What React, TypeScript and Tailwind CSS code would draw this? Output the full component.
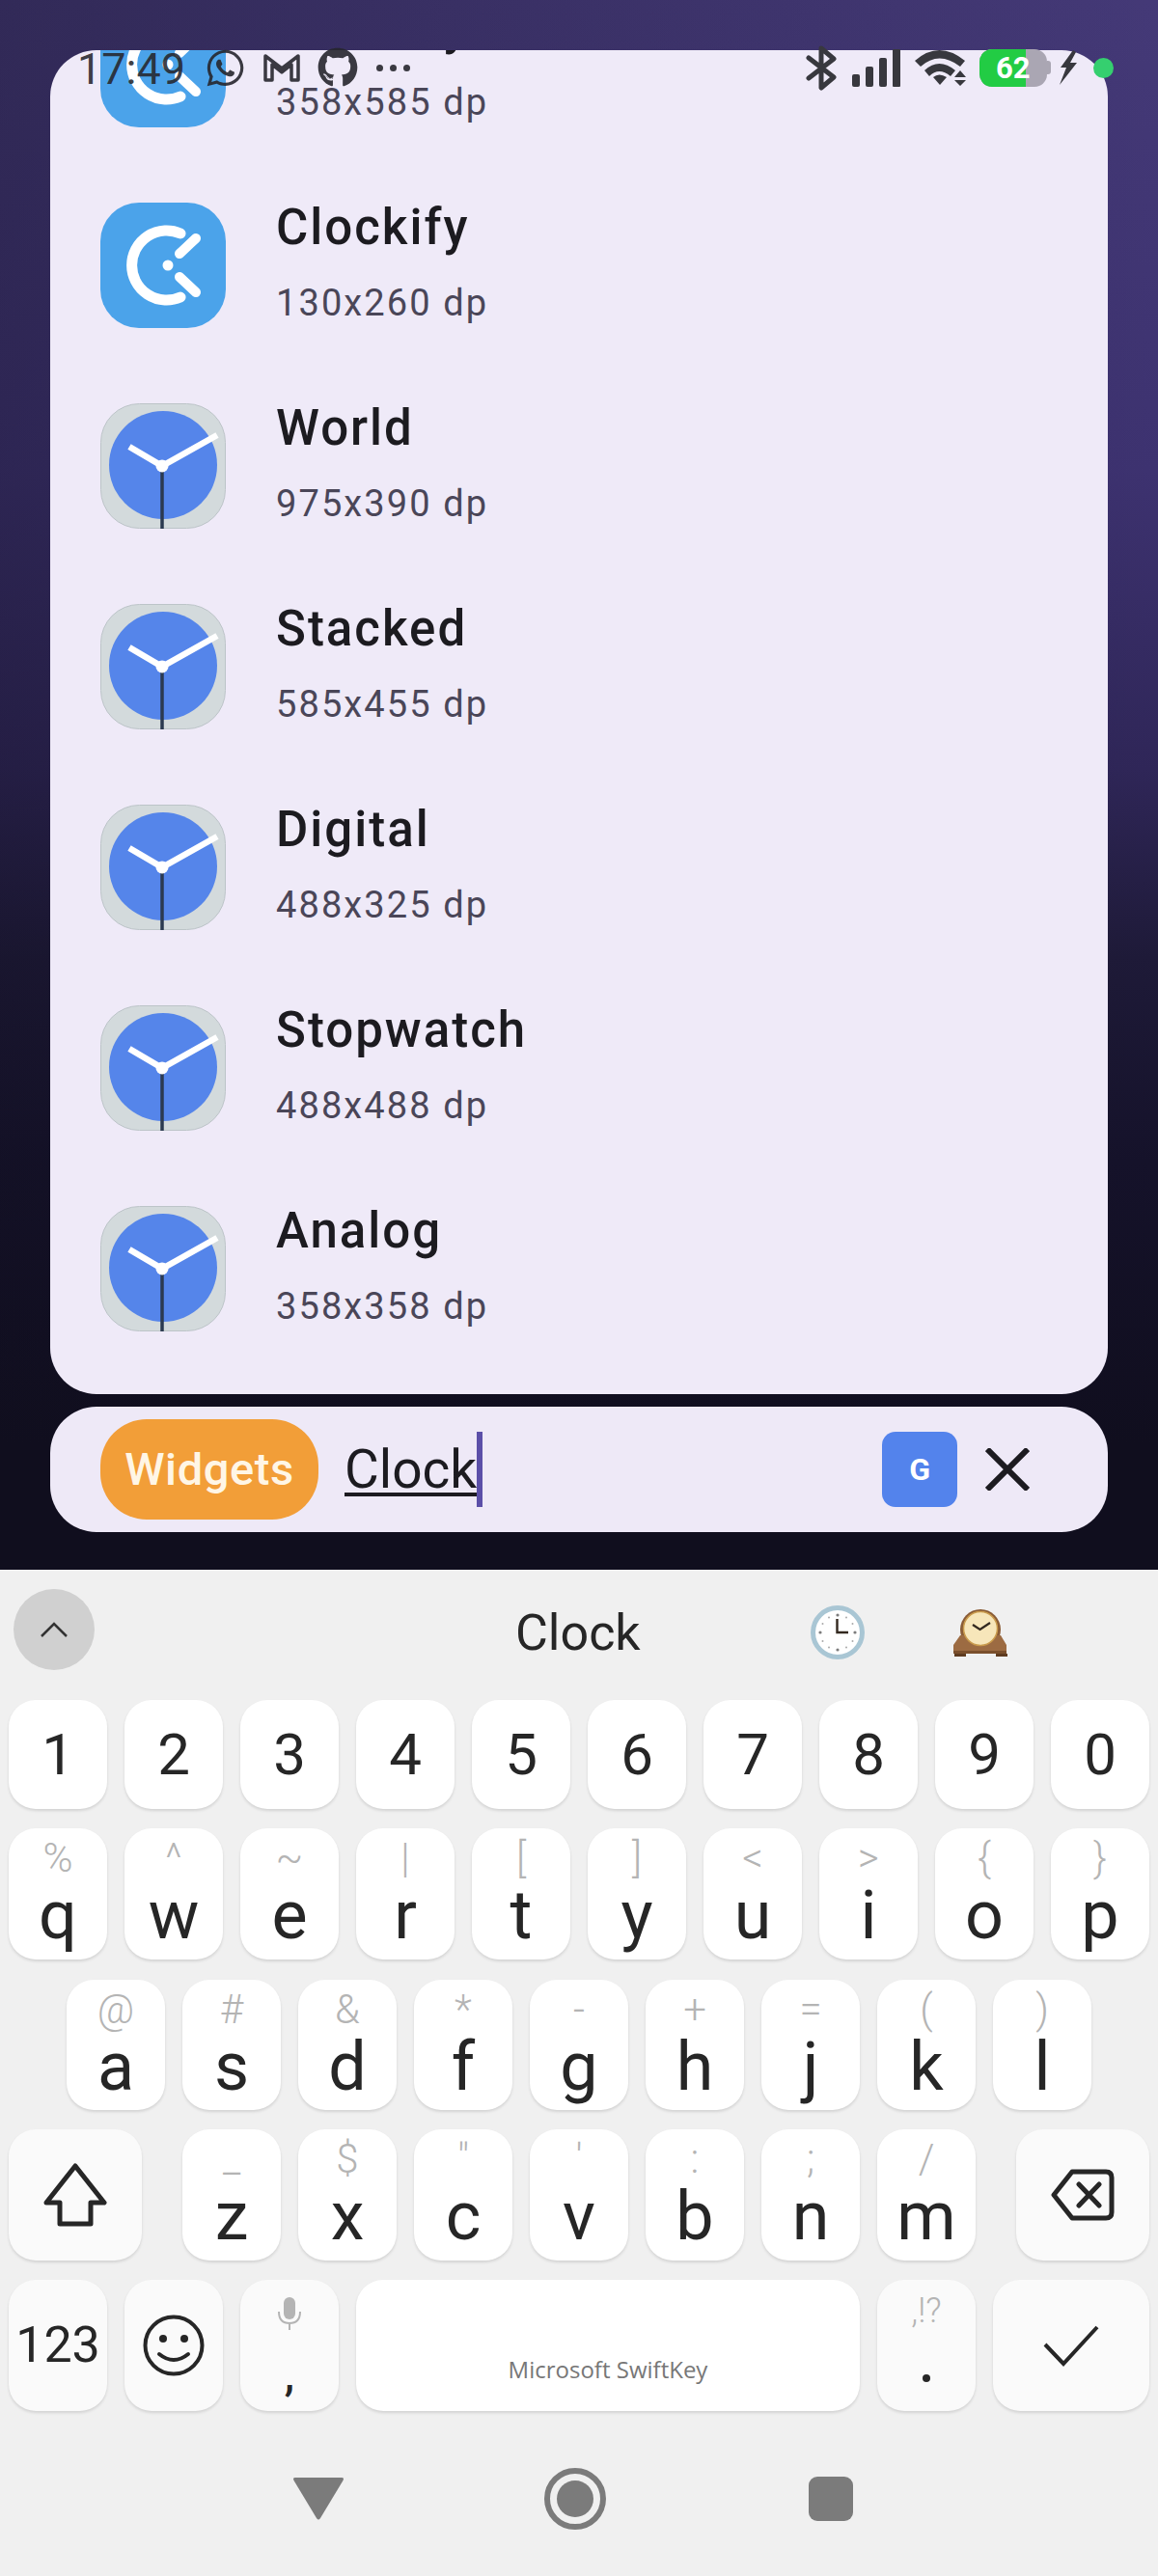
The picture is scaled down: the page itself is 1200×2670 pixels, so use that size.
import React from 'react';
import { FaWhatsapp, FaGithub } from 'react-icons/fa';

const widgets = [
  { name: 'Clockify', size: '358x585 dp', app: 'clockify' },
  { name: 'Clockify', size: '130x260 dp', app: 'clockify' },
  { name: 'World', size: '975x390 dp', app: 'clock' },
  { name: 'Stacked', size: '585x455 dp', app: 'clock' },
  { name: 'Digital', size: '488x325 dp', app: 'clock' },
  { name: 'Stopwatch', size: '488x488 dp', app: 'clock' },
  { name: 'Analog', size: '358x358 dp', app: 'clock' },
];

const row2 = [
  ['q', '%'], ['w', '^'], ['e', '~'], ['r', '|'], ['t', '['],
  ['y', ']'], ['u', '<'], ['i', '>'], ['o', '{'], ['p', '}'],
];
const row3 = [
  ['a', '@'], ['s', '#'], ['d', '&'], ['f', '*'], ['g', '-'],
  ['h', '+'], ['j', '='], ['k', '('], ['l', ')'],
];
const row4 = [
  ['z', '_'], ['x', '$'], ['c', '"'], ['v', "'"], ['b', ':'], ['n', ';'], ['m', '/'],
];

const ClockifyIcon = () => (
  <svg width="130" height="130" viewBox="0 0 130 130" className="shrink-0">
    <rect width="130" height="130" rx="40" fill="#4ba3ea" />
    <path d="M83 32 A36 36 0 1 0 83 98" fill="none" stroke="#fff" strokeWidth="11" strokeLinecap="round" />
    <path d="M82 53 L99 37 M82 77 L99 93" fill="none" stroke="#fff" strokeWidth="10" strokeLinecap="round" />
    <circle cx="70" cy="65" r="5.5" fill="#fff" />
  </svg>
);

const ClockIcon = () => (
  <svg width="130" height="130" viewBox="0 0 130 130" className="shrink-0">
    <rect x="0.5" y="0.5" width="129" height="129" rx="40" fill="#d3dadc" stroke="#bcc4c8" />
    <circle cx="65" cy="64" r="56" fill="#5585ea" />
    <path d="M64 65 L64 130" stroke="#2b3a50" strokeWidth="3.5" />
    <path d="M64 65 L121 33 M64 65 L30 45" stroke="#fff" strokeWidth="6.5" />
    <circle cx="64" cy="65" r="6.5" fill="#fff" />
  </svg>
);

const StatusBar = () => (
  <div className="absolute left-0 top-[46px] w-[1200px] h-[48px] flex items-center text-[#26262ce6]">
    <span className="ml-[80px] w-[111px] text-[45px] leading-[48px] mt-[3px]">17:49</span>
    <FaWhatsapp className="ml-[20.5px]" size={43} />
    <svg className="ml-[18.5px]" width="38" height="30" viewBox="0 0 38 30" fill="none" stroke="currentColor" strokeWidth="3.5">
      <path d="M2 28 V3 L19 16 L36 3 V28 H29 V12 L19 20 L9 12 V28 Z" strokeLinejoin="round" />
    </svg>
    <FaGithub className="ml-[18px]" size={42} />
    <div className="ml-[19px] flex gap-[7px]">
      <div className="w-[7px] h-[7px] rounded-full bg-current" />
      <div className="w-[7px] h-[7px] rounded-full bg-current" />
      <div className="w-[7px] h-[7px] rounded-full bg-current" />
    </div>
    <svg className="ml-[410px]" width="33" height="47" viewBox="0 0 33 47" fill="none" stroke="#38383e" strokeWidth="5" strokeLinecap="round" strokeLinejoin="round">
      <path d="M3 13 L29 33 L16 44 V3 L29 14 L3 34" />
    </svg>
    <svg className="ml-[15px]" width="50" height="39" viewBox="0 0 50 39" fill="#38383e">
      <rect x="0" y="26" width="8" height="13" rx="2" />
      <rect x="14" y="18" width="8" height="21" rx="2" />
      <rect x="28" y="9" width="8" height="30" rx="2" />
      <rect x="42" y="0" width="8" height="39" rx="1" />
    </svg>
    <svg className="ml-[15px]" width="54" height="38" viewBox="0 0 54 38" fill="#38383e">
      <path d="M0 12 Q25 -10 52 12 L47 18 Q25 1 6 18 Z" />
      <path d="M10 22 Q25 8 42 22 L37 28 Q25 18 15 28 Z" />
      <path d="M19 29 Q25 24 33 29 L26 37 Z" />
      <path d="M41 29 L47 22 L53 29 Z M41 32 H53 L47 38 Z" />
    </svg>
    <div className="ml-[13px] relative flex items-center">
      <div className="w-[70px] h-[39px] rounded-[13px] overflow-hidden bg-[#aaa6b3] flex">
        <div className="w-[48px] h-full bg-[#22cc44]" />
      </div>
      <div className="w-[4px] h-[14px] rounded-r-[3px] bg-[#aaa6b3]" />
      <span className="absolute left-[17px] top-0 text-[31px] leading-[39px] font-bold text-white">62</span>
    </div>
    <svg className="ml-[9px]" width="18" height="36" viewBox="0 0 18 36" fill="#38383e">
      <path d="M14 0 L1 18 H7 L0 36 L18 13 H11 L17 2 Z" />
    </svg>
    <div className="ml-[17px] w-[21px] h-[21px] rounded-full bg-[#35cf6f]" />
  </div>
);

const WidgetRow = ({ name, size, app }: { name: string; size: string; app: string }) => (
  <div className="h-[208px] shrink-0 flex items-start pt-[39px] pl-[52px]">
    {app === 'clockify' ? <ClockifyIcon /> : <ClockIcon />}
    <div className="ml-[52px] mt-[-4px] flex flex-col">
      <span className="text-[51px] leading-[60px] font-medium tracking-[2px] text-[#1c1b20]">{name}</span>
      <span className="mt-[25px] text-[38px] leading-[46px] tracking-[2.1px] text-[#4a4658]">{size}</span>
    </div>
  </div>
);

const Key = ({ main, hint }: { main: string; hint: string }) => (
  <div className="w-[102px] h-full shrink-0 rounded-[28px] bg-white shadow-[0_2px_3px_rgba(0,0,0,0.12)] flex flex-col items-center pt-[10px]">
    <span className="h-[42px] text-[42px] leading-[42px] font-light text-[#b4b4b4]">{hint}</span>
    <span className="mt-[3px] h-[70px] text-[70px] leading-[70px] text-[#262626]">{main}</span>
  </div>
);

const DigitKey = ({ n }: { n: number }) => (
  <div className="w-[102px] h-full shrink-0 rounded-[28px] bg-white shadow-[0_2px_3px_rgba(0,0,0,0.12)] flex items-center justify-center text-[60px] text-[#262626]">
    {n}
  </div>
);

const SpecialKey = ({ width, white, children }: { width: string; white?: boolean; children?: React.ReactNode }) => (
  <div className={`${width} ${white ? 'bg-white' : 'bg-[#fafafa]'} h-full shrink-0 rounded-[28px] shadow-[0_2px_3px_rgba(0,0,0,0.12)] flex flex-col items-center justify-center`}>
    {children}
  </div>
);

const WallClockEmoji = () => (
  <svg width="56" height="56" viewBox="0 0 56 56" className="shrink-0">
    <circle cx="28" cy="28" r="25.5" fill="#fff" stroke="#a9c6d4" strokeWidth="5" />
    <path d="M27.5 14 V28 H39" fill="none" stroke="#33281f" strokeWidth="2.4" />
    <circle cx="28" cy="10" r="1.6" fill="#7c7c7c" />
    <circle cx="28" cy="46" r="1.6" fill="#7c7c7c" />
    <circle cx="10" cy="28" r="1.6" fill="#7c7c7c" />
    <circle cx="46" cy="28" r="1.6" fill="#7c7c7c" />
    <circle cx="19" cy="12.5" r="1" fill="#aaa" />
    <circle cx="37" cy="12.5" r="1" fill="#aaa" />
    <circle cx="12.5" cy="19" r="1" fill="#aaa" />
    <circle cx="43.5" cy="19" r="1" fill="#aaa" />
    <circle cx="12.5" cy="37" r="1" fill="#aaa" />
    <circle cx="43.5" cy="37" r="1" fill="#aaa" />
    <circle cx="19" cy="43.5" r="1" fill="#aaa" />
    <circle cx="37" cy="43.5" r="1" fill="#aaa" />
  </svg>
);

const MantelClockEmoji = () => (
  <svg width="57" height="49" viewBox="0 0 57 49" className="shrink-0">
    <circle cx="29" cy="21" r="21" fill="#8a5c36" />
    <path d="M8 27 H50 L56 37 V46 H1 V37 Z" fill="#9c6b42" />
    <rect x="1" y="43" width="55" height="3" fill="#7a4f2c" />
    <rect x="2" y="46" width="12" height="3" fill="#5e3b20" />
    <rect x="45" y="46" width="12" height="3" fill="#5e3b20" />
    <circle cx="29" cy="20" r="17.5" fill="#f7e6ba" stroke="#c99a4c" strokeWidth="1.5" />
    <path d="M21 16 L28.5 21 L39 14" fill="none" stroke="#33281f" strokeWidth="2.2" />
  </svg>
);

export default function App() {
  return (
    <div className="relative w-[1200px] h-[2670px] flex flex-col overflow-hidden font-['Roboto',sans-serif]">
      <div className="h-[1627px] shrink-0 px-[52px] pt-[52px] bg-[linear-gradient(to_right,rgba(16,14,30,0.35),rgba(16,14,30,0)),linear-gradient(180deg,#443977_0%,#3d3270_30%,#2f2658_49%,#1e1a38_61%,#15122a_74%,#100e1e_92%)]">
        <div className="h-[1393px] rounded-[48px] bg-[#efeaf8] overflow-hidden flex flex-col">
          <div className="mt-[-89px] flex flex-col">
            {widgets.map((w, i) => (
              <WidgetRow key={i} name={w.name} size={w.size} app={w.app} />
            ))}
          </div>
        </div>
        <div className="mt-[13px] h-[130px] rounded-[48px] bg-[#eee9f7] flex items-center pl-[52px]">
          <div className="w-[226px] h-[104px] rounded-[48px] bg-[#f29e38] flex items-center justify-center text-[47px] font-medium tracking-[0.6px] text-[#fff6e6]">
            Widgets
          </div>
          <span className="ml-[27px] text-[55px] leading-[78px] underline decoration-[4px] underline-offset-[5px] text-[#1c1b20]">Clock</span>
          <div className="w-[6px] h-[78px] bg-[#5b4fa8]" />
          <div className="ml-[414px] w-[78px] h-[78px] rounded-[14px] bg-[#5383ec] flex items-center justify-center text-[32px] font-bold text-white">G</div>
          <svg className="ml-[29px]" width="46" height="44" viewBox="0 0 46 44" stroke="#1c1b20" strokeWidth="6">
            <path d="M2 1 L44 43 M44 1 L2 43" />
          </svg>
        </div>
      </div>

      <div className="flex-1 bg-[#f0f0f0] flex flex-col">
        <div className="h-[135px] shrink-0 flex items-center pl-[14px]">
          <div className="w-[84px] h-[84px] mt-[-11px] rounded-full bg-[#d0d0d0] flex items-center justify-center">
            <svg width="28" height="16" viewBox="0 0 28 16" fill="none" stroke="#333" strokeWidth="2.5">
              <path d="M1 15 L14 2 L27 15" />
            </svg>
          </div>
          <span className="ml-[436px] w-[126px] text-center text-[52px] leading-[52px] mt-[-3px] text-[#262626]">Clock</span>
          <div className="ml-[180px] mt-[-5px]"><WallClockEmoji /></div>
          <div className="ml-[91px] mt-[-5px]"><MantelClockEmoji /></div>
        </div>

        <div className="px-[9px] flex flex-col">
          <div className="h-[113px] flex gap-[18px]">
            {[1, 2, 3, 4, 5, 6, 7, 8, 9, 0].map((n) => <DigitKey key={n} n={n} />)}
          </div>
          <div className="mt-[20px] h-[136px] flex gap-[18px]">
            {row2.map(([m, h]) => <Key key={m} main={m} hint={h} />)}
          </div>
          <div className="mt-[21px] h-[135px] pl-[60px] flex gap-[18px]">
            {row3.map(([m, h]) => <Key key={m} main={m} hint={h} />)}
          </div>
          <div className="mt-[20px] h-[136px] flex gap-[18px]">
            <SpecialKey width="w-[138px] mr-[24px]">
              <svg width="66" height="66" viewBox="0 0 66 66" fill="none" stroke="#262626" strokeWidth="5" strokeLinejoin="round">
                <path d="M33 3 L63 41 H49 V63 H17 V41 H3 Z" />
              </svg>
            </SpecialKey>
            {row4.map(([m, h]) => <Key key={m} main={m} hint={h} />)}
            <SpecialKey width="w-[138px] ml-[24px]">
              <svg width="66" height="54" viewBox="0 0 66 54" fill="none" stroke="#262626" strokeWidth="5" strokeLinejoin="round" strokeLinecap="round">
                <path d="M22 3 H57 Q63 3 63 9 V45 Q63 51 57 51 H22 L3 27 Z" />
                <path d="M29 16 L50 38 M50 16 L29 38" />
              </svg>
            </SpecialKey>
          </div>
          <div className="mt-[20px] h-[136px] flex gap-[18px]">
            <SpecialKey width="w-[102px]">
              <span className="text-[52px] leading-[52px] text-[#262626]">123</span>
            </SpecialKey>
            <SpecialKey width="w-[102px]">
              <svg width="64" height="64" viewBox="0 0 64 64" fill="none" stroke="#262626" strokeWidth="4">
                <circle cx="32" cy="32" r="29.5" />
                <circle cx="21" cy="25" r="4" fill="#262626" stroke="none" />
                <circle cx="43" cy="25" r="4" fill="#262626" stroke="none" />
                <path d="M17 41 Q32 53 47 41" strokeLinecap="round" strokeWidth="4" />
              </svg>
            </SpecialKey>
            <SpecialKey width="w-[102px]">
              <svg width="24" height="34" viewBox="0 0 24 34">
                <rect x="6" y="0" width="12" height="23" rx="6" fill="#b4b4b4" />
                <path d="M1 15 Q1 27 12 27 Q23 27 23 15 M12 27 V34" fill="none" stroke="#b4b4b4" strokeWidth="2" />
              </svg>
              <span className="mt-[26px] h-[40px] text-[46px] leading-[40px] font-medium text-[#262626]">,</span>
            </SpecialKey>
            <SpecialKey width="w-[522px]" white>
              <span className="mt-[49px] text-[24px] leading-[30px] font-['Open_Sans',sans-serif] text-[#777]">Microsoft SwiftKey</span>
            </SpecialKey>
            <SpecialKey width="w-[102px]">
              <span className="text-[36px] leading-[36px] font-light text-[#b4b4b4]">,!?</span>
              <div className="mt-[48px] mb-[16px] w-[8px] h-[8px] rounded-full bg-[#262626]" />
            </SpecialKey>
            <SpecialKey width="w-[162px]">
              <svg width="58" height="43" viewBox="0 0 58 43" fill="none" stroke="#262626" strokeWidth="4">
                <path d="M2 20 L21 40 L56 2" />
              </svg>
            </SpecialKey>
          </div>
        </div>

        <div className="flex-1 flex items-center pt-[11px]">
          <svg className="ml-[303px]" width="54" height="44" viewBox="0 0 54 44" fill="#7b7b7b">
            <path d="M3 0 H51 Q54 0 52.5 3 L29 42 Q27 45 25 42 L1.5 3 Q0 0 3 0 Z" />
          </svg>
          <svg className="ml-[207px]" width="64" height="64" viewBox="0 0 64 64">
            <circle cx="32" cy="32" r="29" fill="none" stroke="#7b7b7b" strokeWidth="6" />
            <circle cx="32" cy="32" r="19" fill="#7b7b7b" />
          </svg>
          <div className="ml-[210px] w-[46px] h-[46px] rounded-[9px] bg-[#7b7b7b]" />
        </div>
      </div>

      <StatusBar />
    </div>
  );
}
